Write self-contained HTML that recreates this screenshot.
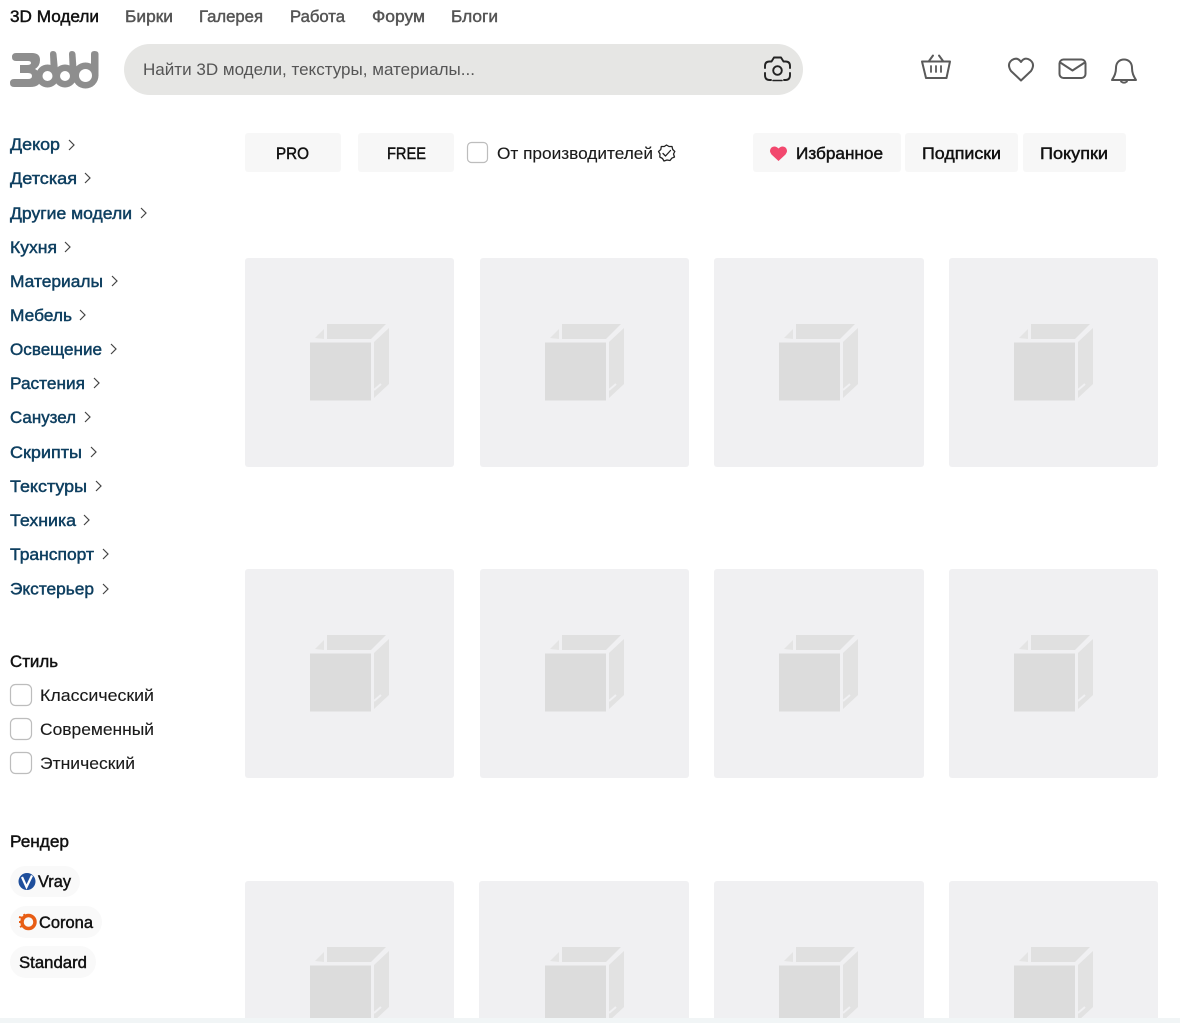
<!DOCTYPE html>
<html lang="ru"><head><meta charset="utf-8"><title>3ddd</title>
<style>
html,body{margin:0;padding:0;background:#fff;width:1180px;height:1023px;overflow:hidden}
svg{display:block;filter:blur(.3px)}
text{font-family:"Liberation Sans",sans-serif;font-size:16.8px}
.m{stroke-width:.45px}
.nav{fill:#555;stroke:#555}
.k{fill:#111;stroke:#111}
.c{fill:#0e3f60;stroke:#0e3f60}
.r{fill:#1a1a1a;stroke:#1a1a1a;stroke-width:.12px}
.chev{fill:none;stroke:#444;stroke-width:1.2}
.box{fill:#fff;stroke:#bdbdbd;stroke-width:1.2}
.ic{fill:none;stroke:#5a5a5a;stroke-width:2;stroke-linecap:round;stroke-linejoin:round}
</style></head><body>
<svg width="1180" height="1023" viewBox="0 0 1180 1023" xmlns="http://www.w3.org/2000/svg">
<defs>
<symbol id="cube" width="80" height="78" viewBox="0 0 80 78" overflow="visible">
<rect x="0" y="18.5" width="61" height="58" fill="#dcdcdc"/>
<polygon points="17,0 76,0 61,15 17,15" fill="#e0e0e0"/>
<polygon points="5,14 14,5 14,15" fill="#e4e4e4"/>
<polygon points="64,18 79,4 79,60 64,74" fill="#e2e2e2"/>
<path d="M71 60 64 66" stroke="#f0f0f2" stroke-width="2"/>
</symbol>
</defs>

<!-- top nav -->
<text x="10" y="22" textLength="89" lengthAdjust="spacingAndGlyphs" class="m k">3D Модели</text>
<text x="125" y="22" textLength="48" lengthAdjust="spacingAndGlyphs" class="m nav">Бирки</text>
<text x="199" y="22" textLength="64" lengthAdjust="spacingAndGlyphs" class="m nav">Галерея</text>
<text x="290" y="22" textLength="55" lengthAdjust="spacingAndGlyphs" class="m nav">Работа</text>
<text x="372" y="22" textLength="53" lengthAdjust="spacingAndGlyphs" class="m nav">Форум</text>
<text x="451" y="22" textLength="47" lengthAdjust="spacingAndGlyphs" class="m nav">Блоги</text>

<!-- logo -->
<g fill="#8e8e8e">
<title>3ddd</title>
<path d="M16 53H32Q40 53 40 60 40 66 35 69 41 72 41 78 41 87 30 87H14Q10 87 10 83 10 79 14 79H28Q32 79 32 76 32 73 28 73H20V65H27Q31 65 31 63 31 61 28 61H16Q12 61 12 57 12 53 16 53Z"/>
<circle cx="47.500" cy="76" r="11.500"/><circle cx="65" cy="76" r="11.500"/><circle cx="85.500" cy="75.500" r="13"/>
<path d="M50 54Q50 51 53 51 56 51 56.500 54L58.500 76H51Z"/>
<path d="M69 54Q69 51 72 51 75 51 75.500 54L77 76H70Z"/>
<path d="M91 54Q91 51 94.500 51 98.500 51 98.500 54V76H91Z"/>
<circle cx="47.500" cy="76" r="5" fill="#fff"/><circle cx="65" cy="76" r="5" fill="#fff"/><circle cx="85.500" cy="75.500" r="6.500" fill="#fff"/>
</g>

<!-- search -->
<rect x="124" y="44" width="679" height="51" rx="25.500" fill="#e6e6e4"/>
<text x="143" y="75" textLength="332" lengthAdjust="spacingAndGlyphs" fill="#555">Найти 3D модели, текстуры, материалы...</text>
<g fill="none" stroke="#222" stroke-width="1.900" stroke-linecap="round" stroke-linejoin="round">
<path d="M765 68V66Q765 61.500 769.500 61.500H771.500L774 57.500H781L783.500 61.500H785.500Q790 61.500 790 66V68"/>
<path d="M765 73V75Q765 80 769.500 80H771M784 80H785.500Q790 80 790 75V73"/>
<path d="M773 80.500H782" stroke-width="1.600"/>
<circle cx="777.500" cy="70.500" r="4.300"/>
</g>

<!-- header icons -->
<g class="ic">
<path d="M922 61.500H950L946.500 78H926Z"/>
<path d="M929 61 933 55.500M943 61 939 55.500"/>
<path d="M931 66V72M936 66V72M941 66V72" stroke-width="1.800"/>
<path d="M1021 80.500 1011 71Q1006.500 64 1012 60 1017.500 56.500 1021 62 1024.500 56.500 1030 60 1035.500 64 1031 71Z"/>
<rect x="1059.500" y="59.500" width="26" height="18.500" rx="4"/>
<path d="M1061 63 1072.500 70.500 1084 63"/>
<path d="M1112 80H1136C1133.500 76 1132 73 1132 68 1132 62.500 1128.500 59.500 1124 59.500 1119.500 59.500 1116 62.500 1116 68 1116 73 1114.500 76 1112 80Z"/>
<path d="M1121 81.500Q1124 83.800 1127 81.500" stroke-width="1.800"/>
</g>

<!-- filter buttons -->
<rect x="245" y="133" width="96" height="39" rx="3" fill="#f7f7f7"/>
<text x="276" y="159" textLength="33" lengthAdjust="spacingAndGlyphs" class="m k">PRO</text>
<rect x="358" y="133" width="96" height="39" rx="3" fill="#f7f7f7"/>
<text x="387" y="159" textLength="39" lengthAdjust="spacingAndGlyphs" class="m k">FREE</text>
<rect x="467.500" y="142.500" width="20" height="20" rx="4" class="box"/>
<text x="497" y="159" textLength="156" lengthAdjust="spacingAndGlyphs" class="r">От производителей</text>
<g fill="none" stroke="#222" stroke-width="1.300" stroke-linecap="round" stroke-linejoin="round">
<path d="M666.500 145 669 146.500 672 146.500 672.700 149.500 674.800 151.500 673.500 154 674.500 157 671.800 158.200 670 160.500 667 160 664 161 662.500 158.500 659.800 157 660 154 658.500 151.500 660.800 149.500 661.300 146.500 664.300 146.500Z"/>
<path d="M663 153.500 665.500 156 670.500 150.500"/>
</g>

<rect x="753" y="133" width="148" height="39" rx="3" fill="#f7f7f7"/>
<path d="M778.500 161 771.500 154.500Q768.500 150.500 771.500 147.500 775 145 778.500 148.500 782 145 785.500 147.500 788.500 150.500 785.500 154.500Z" fill="#f2486e"/>
<text x="796" y="159" textLength="87" lengthAdjust="spacingAndGlyphs" class="m k">Избранное</text>
<rect x="905" y="133" width="113" height="39" rx="3" fill="#f7f7f7"/>
<text x="922" y="159" textLength="79" lengthAdjust="spacingAndGlyphs" class="m k">Подписки</text>
<rect x="1023" y="133" width="103" height="39" rx="3" fill="#f7f7f7"/>
<text x="1040" y="159" textLength="68" lengthAdjust="spacingAndGlyphs" class="m k">Покупки</text>

<!-- categories -->
<text x="10" y="150" textLength="50" lengthAdjust="spacingAndGlyphs" class="m c">Декор</text><polyline class="chev" points="69,140 74,145 69,150"/>
<text x="10" y="184" textLength="67" lengthAdjust="spacingAndGlyphs" class="m c">Детская</text><polyline class="chev" points="85,173 90,178 85,183"/>
<text x="10" y="219" textLength="122" lengthAdjust="spacingAndGlyphs" class="m c">Другие модели</text><polyline class="chev" points="141,208 146,213 141,218"/>
<text x="10" y="253" textLength="47" lengthAdjust="spacingAndGlyphs" class="m c">Кухня</text><polyline class="chev" points="65,242 70,247 65,252"/>
<text x="10" y="287" textLength="93" lengthAdjust="spacingAndGlyphs" class="m c">Материалы</text><polyline class="chev" points="112,276 117,281 112,286"/>
<text x="10" y="321" textLength="62" lengthAdjust="spacingAndGlyphs" class="m c">Мебель</text><polyline class="chev" points="80,310 85,315 80,320"/>
<text x="10" y="355" textLength="92" lengthAdjust="spacingAndGlyphs" class="m c">Освещение</text><polyline class="chev" points="111,344 116,349 111,354"/>
<text x="10" y="389" textLength="75" lengthAdjust="spacingAndGlyphs" class="m c">Растения</text><polyline class="chev" points="94,378 99,383 94,388"/>
<text x="10" y="423" textLength="66" lengthAdjust="spacingAndGlyphs" class="m c">Санузел</text><polyline class="chev" points="85,412 90,417 85,422"/>
<text x="10" y="458" textLength="72" lengthAdjust="spacingAndGlyphs" class="m c">Скрипты</text><polyline class="chev" points="91,447 96,452 91,457"/>
<text x="10" y="492" textLength="77" lengthAdjust="spacingAndGlyphs" class="m c">Текстуры</text><polyline class="chev" points="96,481 101,486 96,491"/>
<text x="10" y="526" textLength="66" lengthAdjust="spacingAndGlyphs" class="m c">Техника</text><polyline class="chev" points="84,515 89,520 84,525"/>
<text x="10" y="560" textLength="84" lengthAdjust="spacingAndGlyphs" class="m c">Транспорт</text><polyline class="chev" points="103,549 108,554 103,559"/>
<text x="10" y="594.500" textLength="84" lengthAdjust="spacingAndGlyphs" class="m c">Экстерьер</text><polyline class="chev" points="103,584 108,589 103,594"/>

<!-- style -->
<text x="10" y="667" textLength="48" lengthAdjust="spacingAndGlyphs" class="m k">Стиль</text>
<rect x="10.500" y="684.500" width="21" height="21" rx="5" class="box"/>
<text x="40" y="701" textLength="114" lengthAdjust="spacingAndGlyphs" class="r">Классический</text>
<rect x="10.500" y="718.500" width="21" height="21" rx="5" class="box"/>
<text x="40" y="735" textLength="114" lengthAdjust="spacingAndGlyphs" class="r">Современный</text>
<rect x="10.500" y="752.500" width="21" height="21" rx="5" class="box"/>
<text x="40" y="769" textLength="95" lengthAdjust="spacingAndGlyphs" class="r">Этнический</text>

<!-- render -->
<text x="10" y="847" textLength="59" lengthAdjust="spacingAndGlyphs" class="m k">Рендер</text>
<rect x="10" y="866" width="70" height="31" rx="15.500" fill="#f9f9f9"/>
<circle cx="27" cy="881.500" r="8.500" fill="#1f4f9c"/>
<path d="M22 877 26.500 887 32 875.500" fill="none" stroke="#fff" stroke-width="2.200"/>
<text x="38" y="887" textLength="33" lengthAdjust="spacingAndGlyphs" class="m k">Vray</text>
<rect x="10" y="906" width="92" height="32" rx="16" fill="#f9f9f9"/>
<circle cx="28.500" cy="922" r="6.500" fill="none" stroke="#e85d14" stroke-width="3.500"/>
<path d="M19 917 23 918M19 922H22M20 927 23 925.500M24 914 25 917" stroke="#e85d14" stroke-width="2"/>
<text x="39" y="928" textLength="54" lengthAdjust="spacingAndGlyphs" class="m k">Corona</text>
<rect x="10" y="946" width="86" height="32" rx="16" fill="#f9f9f9"/>
<text x="19" y="968" textLength="68" lengthAdjust="spacingAndGlyphs" class="m k">Standard</text>

<!-- tiles -->
<g fill="#f0f0f2">
<rect x="245" y="258" width="209" height="209" rx="3"/><rect x="480" y="258" width="209" height="209" rx="3"/><rect x="714" y="258" width="210" height="209" rx="3"/><rect x="949" y="258" width="209" height="209" rx="3"/>
<rect x="245" y="569" width="209" height="209" rx="3"/><rect x="480" y="569" width="209" height="209" rx="3"/><rect x="714" y="569" width="210" height="209" rx="3"/><rect x="949" y="569" width="209" height="209" rx="3"/>
<rect x="245" y="881" width="209" height="142" rx="3"/><rect x="479" y="881" width="210" height="142" rx="3"/><rect x="714" y="881" width="210" height="142" rx="3"/><rect x="949" y="881" width="209" height="142" rx="3"/>
</g>
<use href="#cube" x="310" y="324"/><use href="#cube" x="545" y="324"/><use href="#cube" x="779" y="324"/><use href="#cube" x="1014" y="324"/>
<use href="#cube" x="310" y="635"/><use href="#cube" x="545" y="635"/><use href="#cube" x="779" y="635"/><use href="#cube" x="1014" y="635"/>
<use href="#cube" x="310" y="947"/><use href="#cube" x="545" y="947"/><use href="#cube" x="779" y="947"/><use href="#cube" x="1014" y="947"/>

<rect x="0" y="1018" width="1180" height="5" fill="#f1f5f6"/>
</svg>
</body></html>
